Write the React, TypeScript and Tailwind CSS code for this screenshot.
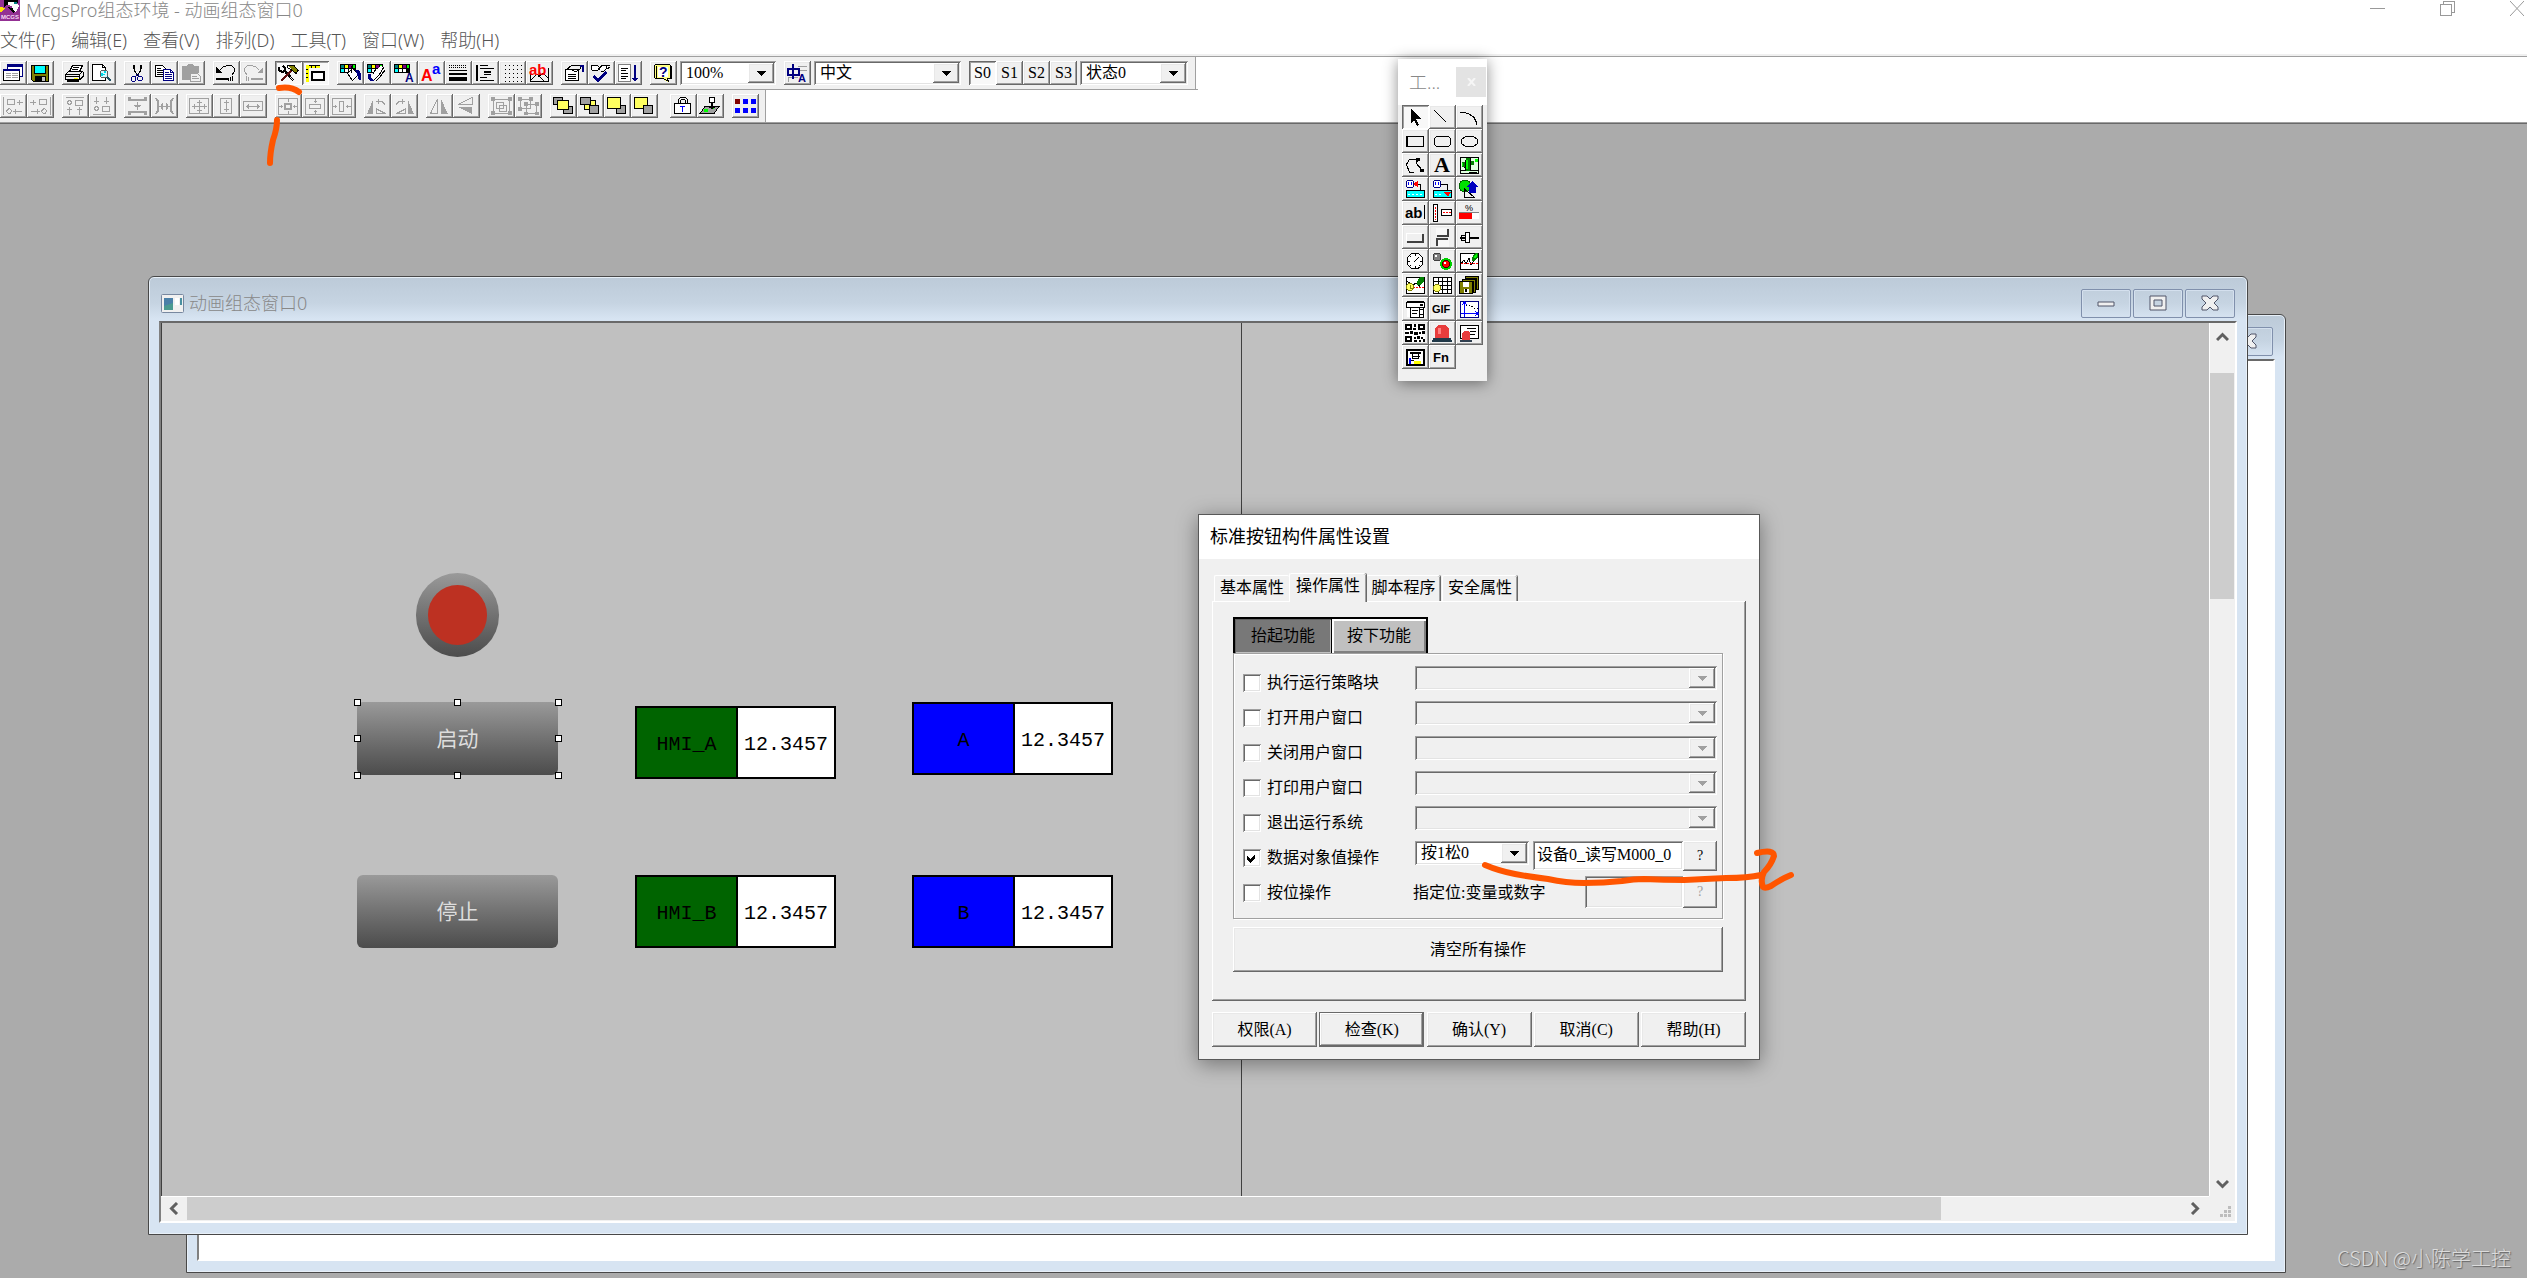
import React from 'react';
import type { ReactNode } from 'react';

const RAISED =
  'bg-[#f0f0f0] shadow-[inset_-1px_-1px_#696969,inset_1px_1px_#fff,inset_-2px_-2px_#a0a0a0,inset_2px_2px_#e8e8e8]';
const PRESSED = 'bg-[#f8f8f8] shadow-[inset_1px_1px_#696969,inset_-1px_-1px_#fff,inset_2px_2px_#a0a0a0]';
const SUNKEN =
  'shadow-[inset_1px_1px_#a0a0a0,inset_-1px_-1px_#fff,inset_2px_2px_#696969,inset_-2px_-2px_#e3e3e3]';
const SONG = "font-['Liberation_Serif','Noto_Sans_CJK_SC',serif]";
const UI = "font-['Noto_Sans','Noto_Sans_CJK_SC',sans-serif]";

const NAVY = '#000080';
const GRAY = '#a0a0a0';

type Shape = { d: string; c?: string; w?: number };
const F = ({ d, c = '#000' }: Shape) => <path d={d} fill={c} />;
const L = ({ d, c = '#000', w = 1 }: Shape) => <path d={d} fill="none" stroke={c} strokeWidth={w} />;
const T = ({ x, y, s, c = '#000', children }: { x: number; y: number; s: number; c?: string; children: ReactNode }) => (
  <text x={x} y={y} fontSize={s} fill={c} fontWeight="bold" fontFamily="Liberation Sans, Noto Sans CJK SC, sans-serif">
    {children}
  </text>
);

const palette = (
  <>
    <F d="M3 3h16v9H3z" />
    <F c="#008080" d="M4 4h3v3H4z" />
    <F c="#ffff00" d="M8 4h3v3H8z" />
    <F c="#800080" d="M12 4h3v3h-3z" />
    <F c="#00ff00" d="M16 4h2v3h-2z" />
    <F c="#00ffff" d="M4 8h3v3H4z" />
    <F c="#fff" d="M8 8h3v3H8zM12 8h3v3h-3z" />
  </>
);

const icons: Record<string, ReactNode> = {
  windows: (
    <>
      <F c="#fff" d="M7 3h16v13H7z" />
      <L c={NAVY} d="M7.5 3.5h15v12h-15z" />
      <F c={NAVY} d="M7 3h16v3H7z" />
      <F c="#fff" d="M3 8h17v12H3z" />
      <L d="M3.5 8.5h16v11h-16z" />
      <F c={NAVY} d="M3 8h17v2H3z" />
      <L c={GRAY} d="M6 12.5h5M12 12.5h6M6 14.5h5M12 14.5h6M6 16.5h5M12 16.5h6" />
    </>
  ),
  save: (
    <>
      <F d="M4 4h18v17H6l-2-2z" />
      <F c="#808000" d="M5 5h16v15H6l-1-1z" />
      <F d="M7 4h12v9H7z" />
      <F c="#00ffff" d="M8 5h10v7H8z" />
      <F d="M8 15h11v5H8z" />
      <F c="#c0c0c0" d="M15 16h3v4h-3z" />
    </>
  ),
  print: (
    <>
      <F c="#fff" d="M8 10l3-6h10l-3 6z" />
      <L d="M7.500 10.500l3-6h10l-3 6M11 6.500h6M10 8.500h6M3.500 13.500l3-3h14l-3 3zM3.500 13v5.500h14V13M18 18.500l3-3V11" />
      <F d="M3 15h15v1H3zM5 19h12v2H5z" />
      <F c="#ffff00" d="M12 17h4v1h-4z" />
    </>
  ),
  preview: (
    <>
      <F c="#fff" d="M3 3h11l3 3v14H3z" />
      <L d="M3.500 3.500h10l3 3v13h-13zM13.500 3.500v3h3" />
      <circle cx="15" cy="13" r="4" fill="#d8faff" stroke="#606060" />
      <F c="#00d8e8" d="M12 12h2v3h-2zM15 10h2v2h-2zM14 13h2v1h-2z" />
      <L c="#205060" w={2} d="M18 16l4 4" />
    </>
  ),
  cut: (
    <>
      <L w={2} d="M10 4v4M17 4v4" />
      <L d="M10.500 8v2l4 5M16.500 8v2l-4 5" />
      <L c={NAVY} d="M13 13l-2 4M14 13l1 3" />
      <circle cx="9.500" cy="18" r="2.500" fill="none" stroke={NAVY} />
      <circle cx="16" cy="17.500" r="2.500" fill="none" stroke={NAVY} />
    </>
  ),
  copy: (
    <>
      <F c="#fff" d="M4 4h8l3 3v9H4z" />
      <L d="M4.500 4.500h7l3 3v8h-10zM6 7.500h4M6 9.500h6M6 11.500h6M6 13.500h6" />
      <F c="#fff" d="M12 8h8l3 3v9H12z" />
      <L c={NAVY} d="M12.500 8.500h7l3 3v8h-10zM19.500 8.500v3h3M14 11.500h4M14 13.500h7M14 15.500h7M14 17.500h7" />
    </>
  ),
  paste: (
    <>
      <F c={GRAY} d="M4 5h5l1-2h5l1 2h5v14H4z" />
      <F c="#f0f0f0" d="M12 12h8l3 3v6H12z" />
      <L c={GRAY} d="M12.500 12.500h7l3 3v5h-10zM14 15.500h5M14 17.500h7M9 6.500h7" />
    </>
  ),
  undo: (
    <>
      <L d="M6.500 9.500l4-4h2l1-1h5l3 3v3l-3 4" />
      <F d="M3 6v6h6z" />
      <F d="M3 17h12v2H3zM17 16h1v4h-1zM19 15h1v5h-1zM15 17h1v3h-1z" />
    </>
  ),
  redo: (
    <>
      <L c={GRAY} d="M19.500 9.500l-4-4h-2l-1-1h-5l-3 3v3l3 4" />
      <F c={GRAY} d="M23 6v6h-6z" />
      <F c={GRAY} d="M11 17h12v2H11zM6 15h1v5H6zM8 16h1v4H8z" />
    </>
  ),
  tools: (
    <>
      <L d="M8 9l10 11M9 8l10 11" />
      <L w={2} d="M4 6v3l3 2 3-1V7L8 5" />
      <L c="#601010" w={2} d="M17 9L6 20" />
      <F c="#808000" d="M12 4h7l4 5-2 3-5-4z" />
      <L d="M12 4.500h7l4 5-2 3-5-4-4-2z" />
    </>
  ),
  ruler: (
    <>
      <F c="#ffff00" d="M4 4h14v3H4zM4 7h3v14H4z" />
      <L d="M7 4.500h11M4 8.500h2M4 12.500h2M4 16.500h2M9.500 7V5M13.500 7V5" />
      <F c="#fff" d="M10 11h13v9H10z" />
      <L d="M9.500 10.500h13v9h-13zM10.500 11.500h11v7h-11z" />
    </>
  ),
  fillColor: (
    <>
      {palette}
      <F c="#fff" d="M10 12l5-4 7 6-6 6z" />
      <L d="M10.500 12.500l5-5 6 6-6 6zM14.500 5v7" />
      <F c={NAVY} d="M18 9h4l2 4v6h-2l-2-6z" />
    </>
  ),
  brushColor: (
    <>
      {palette}
      <F c="#fff" d="M11 10l6-5 4 2-5 8-5 4-4-3z" />
      <L d="M20 6l-5 8-5 5H6M11 9l-2 4M21 9l-5 7-4 4" />
      <F c={NAVY} d="M4 13h3v4l3 3H6l-2-2z" />
    </>
  ),
  fontColor: (
    <>
      {palette}
      <T x={14} y={21} s={12} c={NAVY}>A</T>
    </>
  ),
  font: (
    <>
      <T x={3} y={20} s={16} c="#f00">A</T>
      <T x={14} y={13} s={15} c="#00f">a</T>
    </>
  ),
  lineStyle: (
    <>
      <path d="M4 4.500h18M4 6.500h18" stroke="#000" strokeDasharray="1 1" />
      <F d="M4 9h18v1H4zM4 12h18v2H4zM4 16h18v4H4z" />
    </>
  ),
  lineAlign: <F d="M4 4h2v16H4zM8 4h8v1H8zM8 7h14v1H8zM12 10h7v2h-7zM12 13h7v1h-7zM8 16h7v1H8zM8 19h14v1H8z" />,
  grid: (
    <path d="M6 4.500h17M6 8.500h17M6 12.500h17M6 16.500h17M6 20.500h17" stroke="#000" strokeDasharray="1 3" />
  ),
  label: (
    <>
      <L d="M4.500 12v8.500h18v-14M5 19l6-6 7 7M12 16l5-4 5 5" />
      <T x={3} y={14} s={15} c="#f00">ab</T>
    </>
  ),
  props: (
    <>
      <F c="#fff" d="M4 8h13v12H4z" />
      <L d="M4.500 8.500h13v11h-13zM7 13.500h8M7 15.500h8M7 17.500h8M5 9l6-5h3l5 1v3l-4 3-4-2" />
      <F c={NAVY} d="M19 4h4v7h-2V6h-2z" />
    </>
  ),
  check: (
    <>
      <F c="#fff" d="M4 5h16v4H4z" />
      <L d="M3.500 9V4.500h6l2 2-2 3h-6M11 9l3-5h4l1 3-3 3h-3M19 4h3M19 8l3-2" />
      <L c={NAVY} w={2} d="M6 15l4 4 8-8M6 16l4 4 8-8" />
    </>
  ),
  sort: (
    <>
      <F c="#fff" d="M4 3h12v17H4z" />
      <L c="#808080" d="M3.500 3.500h12v17h-12z" />
      <L d="M6 7.500h7M6 9.500h5M6 12.500h7M6 15.500h7M6 17.500h5" />
      <F c={NAVY} d="M19 4h2v13h2l-3 4-3-4h2z" />
    </>
  ),
  help: (
    <>
      <F c="#ffff80" d="M5 4h16v14h-4l1 3-5-3H5z" />
      <L d="M5.500 3.500h14l2 2v12h-4l1 3-5-3h-8l-1-1v-12z" />
      <L d="M6.500 4.500v12M20.500 5v12" />
      <F c="#fff" d="M8 6h10v10H8z" />
      <T x={9} y={16} s={14} c={NAVY}>?</T>
    </>
  ),
  translate: (
    <>
      <L c={GRAY} d="M14 5.500h9M14 9.500h9M4 16.500h10M4.500 16v5" />
      <L c={NAVY} w={2} d="M4 8h11v6H4zM9 3v15" />
      <T x={14} y={21} s={11} c={NAVY}>A</T>
    </>
  ),
  alignLeft: <L c={GRAY} d="M3.500 3v18M7.500 5.500h7v5h-7zM17 8.500h6M19.500 6v5M13 17.500h9M15.500 15v5M7.500 15.500l2-1 2 2-1 3h-2l-2-2z" />,
  alignRight: <L c={GRAY} d="M23.500 3v18M12.500 5.500h7v5h-7zM3 8.500h6M6.500 6v5M4 17.500h9M10.500 15v5M15.500 15.500l2-1 2 2-1 3h-2l-2-2z" />,
  alignTop: <L c={GRAY} d="M4 3.500h18M13.500 6.500h7v5h-7zM6.500 6.500h2l1 2-1 2h-2l-1-2zM7.500 13v8M5 15.500h5M17.500 13v8M15 15.500h5" />,
  alignBottom: <L c={GRAY} d="M4 20.500h18M13.500 12.500h7v5h-7zM6.500 12.500h2l1 2-1 2h-2l-1-2zM7.500 3v7M5 7.500h5M17.500 3v7M15 7.500h5" />,
  sameTop: (
    <>
      <F c={GRAY} d="M4 3h3v2h13V3h3v4H4zM4 21h3v-2h13v2h3v-4H4z" />
      <L c={GRAY} d="M13.500 8v8M10 11.500h7M11 12.500h5" />
    </>
  ),
  sameSide: (
    <>
      <F c={GRAY} d="M4 4h2l2 3v10l-2 3H4l2-4V8zM23 4h-2l-2 3v10l2 3h2l-2-4V8z" />
      <L c={GRAY} d="M8 12.500h11M11.500 9v7M15.500 9v7M10.500 10v5M16.500 10v5" />
    </>
  ),
  sizeBoth: <L c={GRAY} d="M3.500 4.500h19v15h-19zM6 12.500h15M13.500 6v13M8.500 10v5M18.500 10v5M11 8.500h5M11 16.500h5" />,
  sizeH: <L c={GRAY} d="M7.500 4.500h11v15h-11zM13.500 6v12M11 8.500h5M11 15.500h5" />,
  sizeW: <L c={GRAY} d="M3.500 7.500h19v9h-19zM6 12.500h14M8.500 10v5M17.500 10v5M7.500 11v3M18.500 11v3" />,
  centerBoth: <L c={GRAY} d="M3.500 4.500h19v16h-19zM9.500 9.500h7v6h-7zM10.500 10.500h5v4h-5zM4 12.500h4M18 12.500h4M13.500 5v3M13.500 17v3M6.500 11v3M19.500 11v3" />,
  centerV: <L c={GRAY} d="M3.500 4.500h19v16h-19zM7.500 10.500h11v4h-11zM13.500 5v4M13.500 16v4M12 7.500h3M12 17.500h3" />,
  centerH: <L c={GRAY} d="M3.500 4.500h19v16h-19zM10.500 7.500h4v10h-4zM4 12.500h4M17 12.500h5M6.500 11v3M18.500 11v3" />,
  rotLeft: (
    <>
      <F c={GRAY} d="M3 20l6-14v14z" />
      <L c={GRAY} d="M12.500 15v4.500h9zM12 7.500h6l3 3M14.500 5v5" />
    </>
  ),
  rotRight: (
    <>
      <F c={GRAY} d="M23 20L17 6v14z" />
      <L c={GRAY} d="M14.500 15v4.500h-9zM14 7.500H8l-3 3M11.500 5v5" />
    </>
  ),
  flipH: (
    <>
      <L c={GRAY} d="M11.500 5v14.500h-7z" />
      <F c={GRAY} d="M15 5l7 15h-7z" />
    </>
  ),
  flipV: (
    <>
      <L c={GRAY} d="M5 10.500h14v-7z" />
      <F c={GRAY} d="M5 13h14v7z" />
    </>
  ),
  group: (
    <>
      <L c={GRAY} d="M5.500 5.500h16v14h-16zM8.500 8.500h7v6h-7zM11.500 11.500h7v6h-7z" />
      <F c={GRAY} d="M3 3h4v4H3zM20 3h4v4h-4zM3 17h4v4H3zM20 17h4v4h-4z" />
    </>
  ),
  ungroup: (
    <>
      <L c={GRAY} d="M5.500 5.500h10v9h-10zM11.500 10.500h10v9h-10z" />
      <F c={GRAY} d="M3 3h4v4H3zM14 3h4v4h-4zM3 13h4v4H3zM9 8h4v4H9zM20 8h4v4h-4zM9 18h4v3H9zM20 18h4v3h-4z" />
    </>
  ),
  front: (
    <>
      <F c={GRAY} d="M4 4h8v6H4zM14 13h8v7h-8z" />
      <L d="M3.500 3.500h9v7h-9zM13.500 12.500h9v7h-9z" />
      <F c="#ffff60" d="M8 7h10v8H8z" />
      <L d="M7.500 6.500h11v9h-11z" />
    </>
  ),
  back: (
    <>
      <F c="#ffff60" d="M8 7h10v8H8z" />
      <L d="M7.500 6.500h11v9h-11z" />
      <F c={GRAY} d="M4 4h9v6H4zM13 12h8v8h-8z" />
      <L d="M3.500 3.500h10v7h-10zM12.500 11.500h9v8h-9z" />
    </>
  ),
  forward: (
    <>
      <F c={GRAY} d="M13 12h8v8h-8z" />
      <L d="M12.500 11.500h9v8h-9z" />
      <F c="#ffff60" d="M4 4h12v11H4z" />
      <L d="M3.500 3.500h13v11h-13z" />
    </>
  ),
  backward: (
    <>
      <F c="#ffff60" d="M4 4h12v11H4z" />
      <L d="M3.500 3.500h13v11h-13z" />
      <F c={GRAY} d="M13 12h8v8h-8z" />
      <L d="M12.500 11.500h9v8h-9z" />
    </>
  ),
  lock: (
    <>
      <L d="M8.500 10V5.500l2-2h5l2 2V10M10.500 10V6.500l1-1h3l1 1V10" />
      <F c="#fff" d="M5 10h16v10H5z" />
      <L d="M4.500 9.500h16v10h-16z" />
      <F c="#00f" d="M10 12h5v1h-2v5h-1v-5h-2z" />
    </>
  ),
  stamp: (
    <>
      <F c={GRAY} d="M3 19l5-7h14l-5 8H4z" />
      <F c="#00ff00" d="M7 15h4v3H7zM14 12h3v3h-3z" />
      <L d="M3 19.500l5-7h14l-5 7z" />
      <circle cx="15" cy="6" r="3" fill="#fff" stroke="#000" />
      <F d="M14 9h2v6h-2zM12 13h6v1h-6z" />
    </>
  ),
  dots: (
    <>
      <F c="#800000" d="M3 5h5v5H3z" />
      <F c="#00f" d="M11 5h5v5h-5zM19 5h5v5h-5zM3 14h5v5H3zM11 14h5v5h-5zM19 14h5v5h-5z" />
    </>
  ),
  arrow: <F d="M9 4v14l3-3 3 6 2-1-3-6h5z" />,
  line: <L d="M5 5l12 12" />,
  arc: <L d="M4 7.500h5l5 2 4 3 2 4v3" />,
  rect: <L d="M4.500 7.500h17v10h-17zM5.500 8v9" />,
  roundRect: <L d="M7.500 7.500h12l2 2v6l-2 2h-12l-2-2v-6z" />,
  ellipse: <L d="M9.500 7.500h8l4 3v4l-4 3h-8l-4-3v-4z" />,
  polygon: (
    <>
      <L d="M16 6.500H7.500l-3 5 3 8h4M16 7l-2 3 6 7" />
      <F d="M14 5h4v3h-4zM18 16h4v3h-4z" />
    </>
  ),
  text: (
    <text x="5" y="19" fontSize="22" fontWeight="bold" fontFamily="Liberation Serif, serif">A</text>
  ),
  picture: (
    <>
      <F c="#e0ffe0" d="M4 4h19v17H4z" />
      <L d="M4.500 4.500h18v16h-18zM4 17.500h19M13 19.500h8" />
      <F c="#008000" d="M10 5h4v13h-4zM6 9h3v5H6zM15 8h3v4h-3z" />
      <F c="#00ff00" d="M10 7h2v9h-2zM6 10h1v3H6zM19 6h3v3h-3z" />
      <L d="M9.500 7v10M14.500 5v12M8 14h2" />
    </>
  ),
  tankIn: (
    <>
      <circle cx="8" cy="7" r="4" fill="#fff" stroke={NAVY} />
      <F c="#00f" d="M6 5h1v3H6zM9 5h1v3H9z" />
      <F c="#f00" d="M11 7l5-3v6z" />
      <F c="#00ffff" d="M5 14h17v6H5z" />
      <L d="M16 7.500h2.500V14M4.500 13.500h18v7h-18z" />
      <path d="M6 17.500h15" stroke="#fff" strokeDasharray="2 2" />
    </>
  ),
  tankOut: (
    <>
      <circle cx="8" cy="7" r="4" fill="#fff" stroke={NAVY} />
      <F c="#00f" d="M6 5h1v3H6zM9 5h1v3H9z" />
      <F c="#00ffff" d="M5 14h17v6H5z" />
      <L d="M12 7.500h6.500V14M4.500 13.500h18v7h-18z" />
      <F c="#f00" d="M15 15h7l-3 5z" />
      <path d="M6 17.500h8" stroke="#fff" strokeDasharray="2 2" />
    </>
  ),
  shapes: (
    <>
      <circle cx="9" cy="9" r="6" fill="#00e000" stroke="#006000" />
      <F c="#0000c0" d="M16 4l7 6h-3v6h-7v-6h-2z" />
      <L d="M8.500 12v8.500h10z" />
    </>
  ),
  input: (
    <>
      <T x={3} y={17} s={15}>ab</T>
      <F d="M22 4h1v14h-1z" />
    </>
  ),
  sliders: (
    <>
      <F c="#fff" d="M4 3h5v18H4zM12 9h11v6H12z" />
      <L d="M4.500 3.500h4v17h-4zM12.500 8.500h10v6h-10z" />
      <path d="M6.500 6v13M14 11.500h8" stroke="#f00" strokeDasharray="2 1" />
    </>
  ),
  percent: (
    <>
      <text x="9" y="10" fontSize="9" fontFamily="Liberation Sans">%</text>
      <F c="#808080" d="M3 11h20v1H3z" />
      <F c="#f00" d="M3 12h13v6H3z" />
      <F c="#fff" d="M16 12h7v6h-7z" />
    </>
  ),
  button: (
    <>
      <F c="#404040" d="M5 9h17v9H5z" />
      <F c="#fff" d="M4 8h16v8H4z" />
      <F c="#f0f0f0" d="M5 9h15v7H5z" />
    </>
  ),
  buttons: (
    <>
      <F c="#404040" d="M8 4h12v8H8z" />
      <F c="#f8f8f8" d="M7 3h11v7H7z" />
      <F c="#404040" d="M7 13h12v8H7z" />
      <F c="#f8f8f8" d="M9 15h11v7H9z" />
    </>
  ),
  slider: (
    <>
      <F d="M4 12h19v2H4z" />
      <F c="#fff" d="M9 8h4v10H9z" />
      <L d="M9.500 7.500h4v10h-4zM5.500 10.500h4v5h-4z" />
    </>
  ),
  gauge: (
    <>
      <circle cx="13" cy="12" r="8" fill="#fff" stroke="#000" />
      <L d="M12 13l5-5M13.500 5v2M13.500 17v2M6 12.500h2M18 12.500h2M8 7l1 1M8 17l1-1M17 16l1 1" />
    </>
  ),
  lamps: (
    <>
      <circle cx="8" cy="8" r="4" fill="#808080" stroke="#404040" />
      <circle cx="17" cy="15" r="5" fill="#f00" stroke="#00d000" strokeWidth="2" />
      <circle cx="17" cy="15" r="3.500" fill="none" stroke="#400000" />
      <F c="#fff" d="M6 6h2v2H6zM15 13h2v2h-2z" />
    </>
  ),
  curve: (
    <>
      <F c="#fff" d="M4 4h18v17H4z" />
      <L d="M4.500 4.500h18v16h-18zM5 15l3-4 2 4 3-6 2 7 3-4" />
      <path d="M5 14.500h17" stroke="#f00" strokeDasharray="2 1" />
      <F c="#008000" d="M16 9l3-5h3v4l-3 4h-3z" />
      <F c="#00ff00" d="M18 8l2-3h1v2l-2 3z" />
    </>
  ),
  history: (
    <>
      <F c="#fff" d="M4 4h18v17H4z" />
      <L d="M4.500 4.500h18v16h-18zM5 8l5 4 5-2 4 5" />
      <path d="M5 14.500h17" stroke="#f00" strokeDasharray="2 1" />
      <F c="#008000" d="M15 9l3-5h4v4l-4 4h-3z" />
      <circle cx="8" cy="14" r="3.500" fill="#ffff60" stroke="#808000" />
      <L c="#808000" d="M8 12v3h3" />
    </>
  ),
  table: (
    <>
      <F c="#fff" d="M4 4h19v16H4z" />
      <L d="M4.500 4.500h18v16h-18zM4 8.500h19M4 12.500h19M4 16.500h19M9.500 4v16M13.500 4v16M18.500 4v16" />
      <circle cx="8" cy="15" r="3.500" fill="#ffff60" stroke="#808000" />
    </>
  ),
  disks: (
    <>
      <F d="M9 3h14v14H9zM6 6h14v14H6zM3 8h14v13H3z" />
      <F c="#808000" d="M10 4h12v1H10zM21 5h1v11h-1zM7 7h12v1H7zM18 8h1v11h-1zM4 9h12v11H4z" />
      <F c="#fff" d="M7 9h6v5H7zM8 16h5v4H8z" />
      <F d="M9 16h2v3H9z" />
    </>
  ),
  combo: (
    <>
      <F c="#fff" d="M5 5h18v15H5z" />
      <L d="M4.500 5.500h18v5h-18zM8.500 10.500h13v10h-13zM17.500 10v10M10 13.500h6M10 16.500h5" />
      <F d="M5 4h17v2H5zM18 7h3v2h-3zM18 12h3v1h-3zM18 17h3v1h-3z" />
    </>
  ),
  gif: (
    <text x="3" y="16" fontSize="11" fontFamily="Liberation Sans, sans-serif" fontWeight="bold">GIF</text>
  ),
  plot: (
    <>
      <F c="#fff" d="M4 4h19v17H4z" />
      <L c={NAVY} d="M4.500 4.500h18v16h-18z" />
      <L c="#00f" d="M8.500 5v15M5 16.500h17M6 8l2.500-3 2.500 3M19 14l3 2.500-3 2.500" />
      <path d="M10 8.500h5l3 3h4" fill="none" stroke="#000" strokeDasharray="1 2" />
    </>
  ),
  qr: (
    <>
      <F c="#fff" d="M3 3h20v18H3z" />
      <L w={2} d="M4 4h5v4H4zM17 4h5v4h-5zM4 16h5v4H4z" />
      <F d="M12 3h2v3h-2zM11 7h3v2h-3zM3 11h4v2H3zM8 10h3v3H8zM12 11h4v3h-4zM17 11h2v2h-2zM20 10h3v3h-3zM12 16h2v2h-2zM15 15h3v3h-3zM19 16h2v2h-2zM12 19h3v2h-3zM17 19h2v2h-2zM21 18h2v3h-2z" />
    </>
  ),
  alarm: (
    <>
      <F c="#e83c3c" d="M6 18V8l3-4h8l3 4v10z" />
      <F c="#ff8080" d="M9 7h3v6H9z" />
      <F c="#203848" d="M4 17h18v2h1v2H3v-2h1z" />
    </>
  ),
  alarmLog: (
    <>
      <F c="#fff" d="M4 4h19v14H4z" />
      <L d="M4.500 4.500h18v13h-18zM11 7.500h9M14 10.500h6M14 13.500h5" />
      <F c="#e83c3c" d="M6 19v-7l2-2h4l2 2v7z" />
      <F c="#304050" d="M4 19h12v2H4z" />
    </>
  ),
  painter: (
    <>
      <F c="#fff" d="M4 4h18v17H4z" />
      <L d="M4.500 4.500h18v16h-18zM5.500 5.500h16v14h-16zM8 8.500h11M10.500 8v5h6V8M9 15.500h3M8 7.500h11" />
      <F c="#00f" d="M7 13h2v6H7z" />
      <F c="#ffff00" d="M12 16h7v3h-7z" />
      <L d="M10 11.500h8" />
    </>
  ),
  fn: <T x={4} y={17} s={13}>Fn</T>,
};

function Tool({ name, pressed = false }: { name: string; pressed?: boolean }) {
  return (
    <button type="button" aria-label={name} aria-pressed={pressed} className={`h-6 w-[27px] ${pressed ? PRESSED : RAISED}`}>
      <svg width="27" height="24" viewBox="0 0 27 24" className="overflow-visible" shapeRendering="crispEdges" aria-hidden="true">
        {icons[name]}
      </svg>
    </button>
  );
}

function Group({ names, pressed = false }: { names: string[]; pressed?: boolean }) {
  return (
    <div className="flex">
      {names.map((n) => (
        <Tool key={n} name={n} pressed={pressed} />
      ))}
    </div>
  );
}

function Combo({ value, label, disabled = false, className = '' }: { value: string; label: string; disabled?: boolean; className?: string }) {
  return (
    <div className={`relative h-6 ${className}`}>
      <select
        aria-label={label}
        disabled={disabled}
        className={`h-6 w-full appearance-none pl-1.5 text-base leading-6 text-black opacity-100 ${SUNKEN} ${disabled ? 'bg-[#f0f0f0]' : 'bg-white'}`}
      >
        <option>{value}</option>
      </select>
      <span className={`pointer-events-none absolute top-0.5 right-0.5 flex h-5 w-[26px] items-center justify-center ${RAISED}`}>
        <svg width="9" height="5" viewBox="0 0 9 5" shapeRendering="crispEdges">
          <path d="M0 0h9L4.500 5z" fill={disabled ? GRAY : '#000'} />
        </svg>
      </span>
    </div>
  );
}

const menus = ['文件(F)', '编辑(E)', '查看(V)', '排列(D)', '工具(T)', '窗口(W)', '帮助(H)'];
const states = ['S0', 'S1', 'S2', 'S3'];

function Header() {
  return (
    <header className="shrink-0 border-b border-[#696969] bg-white">
      <div className="flex h-[23px] items-start">
        <svg width="20" height="21" viewBox="0 0 20 21" className="shrink-0" shapeRendering="crispEdges">
          <F c="#933093" d="M0 0h20v21H0z" />
          <F d="M4 0h14v3l-3 2H7l-3 2zM8 7l9 3-4 3z" />
          <F c="#fff" d="M8 2h8l3 4-3 6-3-2-1-4-4-1z" />
          <F c="#008080" d="M14 2h3v2h-3z" />
          <F c="#ffe000" d="M0 7l5 1-3 4H0z" />
          <text x="1" y="19" fontSize="6" fontWeight="bold" fill="#f4d8f4" fontFamily="Liberation Sans">MCGS</text>
        </svg>
        <h1 className="ml-1.5 text-lg leading-5 font-light text-[#888]">McgsPro组态环境 - 动画组态窗口0</h1>
        <div className="ml-auto flex">
          <button type="button" aria-label="最小化" className="flex h-[18px] w-[69px] justify-center">
            <svg width="15" height="18" viewBox="0 0 15 18" shapeRendering="crispEdges"><L c="#999" d="M0 8.500h15" /></svg>
          </button>
          <button type="button" aria-label="还原" className="flex h-[18px] w-[70px] justify-center">
            <svg width="15" height="18" viewBox="0 0 15 18" shapeRendering="crispEdges"><L c="#999" d="M.5 4.500h11v11H.5zM3.500 4V1.500h11v11H12" /></svg>
          </button>
          <button type="button" aria-label="关闭" className="flex h-[18px] w-[45px] items-start justify-end pr-[3px]">
            <svg width="14" height="18" viewBox="0 0 14 18"><L c="#999" d="M0 1l14 15M14 1L0 16" /></svg>
          </button>
        </div>
      </div>
      <nav className="flex h-[33px] items-center gap-4 border-b-2 border-[#f0f0f0] pt-0.5 text-lg font-light text-[#555]">
        {menus.map((m) => (
          <button key={m} type="button">{m}</button>
        ))}
      </nav>
      <div className={`border-y border-[#a0a0a0] ${SONG}`}>
        <div className="flex h-8 w-fit items-center gap-2 border-r border-[#a0a0a0] bg-[#f0f0f0] pr-[7px]">
          <Group names={['windows', 'save']} />
          <Group names={['print', 'preview']} />
          <Group names={['cut', 'copy', 'paste']} />
          <Group names={['undo', 'redo']} />
          <Group names={['tools', 'ruler']} pressed />
          <Group names={['fillColor', 'brushColor', 'fontColor', 'font', 'lineStyle', 'lineAlign', 'grid', 'label']} />
          <Group names={['props', 'check', 'sort']} />
          <div className="flex gap-[3px]">
            <Tool name="help" />
            <Combo value="100%" label="缩放" className="w-24" />
          </div>
          <div className="flex gap-[3px]">
            <Tool name="translate" />
            <Combo value="中文" label="语言" className="w-[147px]" />
          </div>
          <div className="flex">
            {states.map((s) => (
              <button key={s} type="button" className={`h-6 w-[27px] text-base leading-6 ${s === 'S0' ? PRESSED : RAISED}`}>{s}</button>
            ))}
            <Combo value="状态0" label="状态" className="ml-[3px] w-[108px]" />
          </div>
        </div>
        <div className="h-px w-[1198px] bg-[#a0a0a0]" />
        <div className="flex h-8 w-fit items-center gap-2 border-r border-[#a0a0a0] bg-[#f0f0f0] pr-1.5">
          <Group names={['alignLeft', 'alignRight']} />
          <Group names={['alignTop', 'alignBottom']} />
          <Group names={['sameTop', 'sameSide']} />
          <Group names={['sizeBoth', 'sizeH', 'sizeW']} />
          <Group names={['centerBoth', 'centerV', 'centerH']} />
          <Group names={['rotLeft', 'rotRight']} />
          <Group names={['flipH', 'flipV']} />
          <Group names={['group', 'ungroup']} />
          <Group names={['front', 'back', 'forward', 'backward']} />
          <div className="ml-1 flex"><Group names={['lock', 'stamp']} /></div>
          <Group names={['dots']} />
        </div>
      </div>
    </header>
  );
}

const aeroGlyphs: Record<string, string> = {
  最小化: 'M1 7h16v4H1z',
  最大化: 'M1 1h16v14H1zM5 5v6h8V5z',
  关闭: 'M1 1h5l3 3 3-3h5v3l-4 4 4 4v3h-5l-3-3-3 3H1v-3l4-4-4-4z',
};

function ChildWindow({ title, className, children }: { title: string; className: string; children?: ReactNode }) {
  return (
    <section
      className={`absolute flex h-[959px] w-[2100px] flex-col rounded-t-md border border-[#484848] bg-[#d7e4f2] bg-[linear-gradient(#bccad8,#c6d4e2_26px,#d7e4f2_42px)] px-2.5 pb-[11px] shadow-[inset_0_0_0_1px_#e8f0f8] ${className}`}
    >
      <div className="flex h-11 shrink-0 items-center gap-[5px] px-0.5">
        <svg width="23" height="19" viewBox="0 0 23 19" className="mt-2">
          <rect x=".5" y=".5" width="22" height="18" rx="1" fill="#f0f0f0" stroke="#7888a0" />
          <path d="M3 4h9v12H3z" fill="#4a9a90" />
          <path d="M3 4h9v5l-9 3z" fill="#4a80a8" />
          <path d="M14 4h4v7h-4z" fill="#fff" />
          <path d="M19 4h2v7h-2z" fill="#4a90a0" />
        </svg>
        <h2 className="mt-2 text-lg leading-6 font-light text-[#888]">{title}</h2>
        <div className="mt-2 ml-auto flex gap-0.5">
          {Object.entries(aeroGlyphs).map(([name, d]) => (
            <button
              key={name}
              type="button"
              aria-label={name}
              className="flex h-[29px] w-[50px] items-center justify-center rounded-xs border border-[#8090ac] shadow-[inset_0_0_0_1px_#d4e0ee]"
            >
              <svg width="18" height="16" viewBox="0 0 18 16">
                <path d={d} fill="#f0f0f0" fillRule="evenodd" stroke="#505468" strokeLinejoin="round" />
              </svg>
            </button>
          ))}
        </div>
      </div>
      <div className="min-h-0 flex-1 border-2 border-t-[#696969] border-r-white border-b-white border-l-[#808080] bg-white">{children}</div>
    </section>
  );
}

function Chevron({ d }: { d: string }) {
  return (
    <svg width="13" height="13" viewBox="0 0 13 13"><L c="#606060" w={3} d={d} /></svg>
  );
}

function Readout({ tag, tone, className }: { tag: string; tone: string; className: string }) {
  return (
    <div className={`absolute flex h-[73px] w-[201px] border-2 border-black pt-px font-['Liberation_Mono',monospace] text-xl text-black ${className}`}>
      <span className={`-mt-px flex w-[101px] items-center justify-center border-r-2 border-black pt-1 ${tone}`}>{tag}</span>
      <span className="-mt-px flex flex-1 items-center justify-center bg-white pt-1">12.3457</span>
    </div>
  );
}

const handles = [
  'left-[192px] top-[376px]', 'left-[292px] top-[376px]', 'left-[393px] top-[376px]',
  'left-[192px] top-[412px]', 'left-[393px] top-[412px]',
  'left-[192px] top-[449px]', 'left-[292px] top-[449px]', 'left-[393px] top-[449px]',
];

const PANEL_BUTTON =
  'absolute left-[195px] h-[73px] w-[201px] rounded-md bg-linear-to-b from-[#9a9a9a] to-[#4c4c4c] text-[21px] text-[#ddd]';

function Canvas() {
  return (
    <div className="grid h-full grid-cols-[minmax(0,1fr)_26px] grid-rows-[minmax(0,1fr)_25px] bg-[#f0f0f0]">
      <div className="relative overflow-hidden border-l border-[#404040] bg-[#c0c0c0]">
        <div className="absolute inset-y-0 left-[1079px] w-px bg-[#404040]" />
        <div className="absolute top-[250px] left-[254px] flex h-[84px] w-[83px] items-center justify-center rounded-full bg-linear-to-b from-[#9a9a9a] to-[#4c4c4c]">
          <div className="h-[60px] w-[59px] rounded-full bg-[#bd3122]" />
        </div>
        <button type="button" className={`top-[379px] ${PANEL_BUTTON}`}>启动</button>
        <button type="button" className={`top-[552px] ${PANEL_BUTTON}`}>停止</button>
        {handles.map((h) => (
          <span key={h} className={`absolute size-[7px] border border-black bg-white ${h}`} />
        ))}
        <Readout tag="HMI_A" tone="bg-[#006400]" className="top-[383px] left-[473px]" />
        <Readout tag="HMI_B" tone="bg-[#006400]" className="top-[552px] left-[473px]" />
        <Readout tag="A" tone="bg-[#0000ff]" className="top-[379px] left-[750px]" />
        <Readout tag="B" tone="bg-[#0000ff]" className="top-[552px] left-[750px]" />
      </div>
      <div className="flex flex-col items-center border-l border-white pr-px">
        <span className="flex h-[50px] items-start pt-2"><Chevron d="M1 9l5.500-5.500L12 9" /></span>
        <span className="h-[226px] w-full bg-[#cdcdcd]" />
        <span className="mt-auto flex pb-1.5"><Chevron d="M1 4l5.500 5.500L12 4" /></span>
      </div>
      <div className="flex items-center border-t border-white pb-px">
        <span className="flex w-[26px] justify-center"><Chevron d="M9 1L3.500 6.500 9 12" /></span>
        <span className="h-full w-[1754px] bg-[#cdcdcd]" />
        <span className="ml-auto flex pr-2"><Chevron d="M4 1l5.500 5.500L4 12" /></span>
      </div>
      <div className="flex items-end justify-end p-1">
        <svg width="11" height="11" viewBox="0 0 11 11"><F c="#bdbdbd" d="M8 0h3v3H8zM4 4h3v3H4zM8 4h3v3H8zM0 8h3v3H0zM4 8h3v3H4zM8 8h3v3H8z" /></svg>
      </div>
    </div>
  );
}

const toolbox = [
  'arrow', 'line', 'arc', 'rect', 'roundRect', 'ellipse', 'polygon', 'text', 'picture', 'tankIn', 'tankOut', 'shapes',
  'input', 'sliders', 'percent', 'button', 'buttons', 'slider', 'gauge', 'lamps', 'curve', 'history', 'table', 'disks',
  'combo', 'gif', 'plot', 'qr', 'alarm', 'alarmLog', 'painter', 'fn',
];

function Toolbox() {
  return (
    <aside className="absolute top-[59px] left-[1398px] w-[89px] bg-[#f0f0f0] pb-3 shadow-[0_2px_14px_rgba(0,0,0,0.45)]">
      <div className="flex h-[46px] items-center justify-between bg-white pl-[11px] pr-px text-lg font-light text-[#888]">
        <span>工...</span>
        <button type="button" aria-label="关闭工具箱" className="flex size-[30px] items-center justify-center bg-[#e3e3e3]">
          <svg width="9" height="8" viewBox="0 0 9 8"><L c="#f6f6f6" w={2} d="M1 0l7 8M8 0L1 8" /></svg>
        </button>
      </div>
      <div className="grid w-fit grid-cols-3 px-1">
        {toolbox.map((n) => (
          <Tool key={n} name={n} pressed={n === 'arrow'} />
        ))}
      </div>
    </aside>
  );
}

function Tick({ label, checked = false }: { label: string; checked?: boolean }) {
  return (
    <label className="flex items-center gap-1.5 pt-2 leading-[18px]">
      <span className="relative flex size-[18px]">
        <input type="checkbox" defaultChecked={checked} className={`size-[18px] appearance-none bg-white ${SUNKEN}`} />
        {checked && (
          <svg width="18" height="18" viewBox="0 0 18 18" className="pointer-events-none absolute inset-0" shapeRendering="crispEdges">
            <F d="M4 7l3 3 5-5v4l-5 5-3-3z" />
          </svg>
        )}
      </span>
      {label}
    </label>
  );
}

const plainOps = ['执行运行策略块', '打开用户窗口', '关闭用户窗口', '打印用户窗口', '退出运行系统'];
const footer = ['权限(A)', '检查(K)', '确认(Y)', '取消(C)', '帮助(H)'];
const ROW = 'grid h-[35px] grid-cols-[172px_302px] items-start';
const TAB = 'border-t border-l border-white rounded-t-xs shadow-[1px_0_#696969,inset_-1px_0_#a0a0a0]';

function Dialog() {
  return (
    <div
      role="dialog"
      aria-label="标准按钮构件属性设置"
      className={`absolute top-[514px] left-[1198px] w-[562px] border border-[#585858] bg-[#f0f0f0] pb-3 text-base text-black shadow-[0_4px_20px_rgba(0,0,0,0.4)] ${SONG}`}
    >
      <h2 className={`flex h-[44px] items-center bg-white pb-0.5 pl-[11px] text-lg font-normal ${UI}`}>标准按钮构件属性设置</h2>
      <div className="px-[13px] pt-3.5">
        <div role="tablist" className="flex items-end pl-0.5">
          <button role="tab" type="button" className="h-[26px] w-[75px] rounded-t-xs border-t border-l border-white pb-0.5">基本属性</button>
          <button role="tab" type="button" aria-selected="true" className={`relative -mb-px h-[29px] w-[77px] bg-[#f0f0f0] pb-1.5 ${TAB}`}>操作属性</button>
          <button role="tab" type="button" className={`h-[26px] w-[74px] pb-0.5 ${TAB}`}>脚本程序</button>
          <button role="tab" type="button" className={`ml-0.5 h-[26px] w-[75px] pb-0.5 ${TAB}`}>安全属性</button>
        </div>
        <div className="h-[400px] px-[21px] pt-4 shadow-[inset_-1px_-1px_#696969,inset_1px_1px_#fff,inset_-2px_-2px_#a0a0a0]">
          <div className="flex w-[195px] border-2 border-b-0 border-black">
            <button type="button" className="h-[34px] w-24 bg-[#787878] shadow-[inset_1px_1px_#606060,inset_-1px_-1px_#c0c0c0]">抬起功能</button>
            <button type="button" className="h-[34px] flex-1 border-l border-black bg-[#c0c0c0] shadow-[inset_2px_2px_#fff,inset_-2px_-2px_#808080]">按下功能</button>
          </div>
          <div className="w-[490px] border border-[#a0a0a0] pt-3 pb-[7px] pl-[9px] shadow-[inset_1px_1px_#fff,1px_1px_#fff]">
            {plainOps.map((op) => (
              <div key={op} className={ROW}>
                <Tick label={op} />
                <Combo value="" label={`${op}选项`} disabled />
              </div>
            ))}
            <div className={ROW}>
              <Tick label="数据对象值操作" checked />
              <div className="flex items-start">
                <Combo value="按1松0" label="操作方式" className="w-[114px] shrink-0" />
                <input aria-label="数据对象" defaultValue="设备0_读写M000_0" className={`ml-1 h-[29px] w-[150px] bg-white px-1 pb-1.5 ${SUNKEN}`} />
                <button type="button" aria-label="选择数据对象" className={`h-[30px] w-[34px] text-sm ${RAISED}`}>?</button>
              </div>
            </div>
            <div className={ROW}>
              <Tick label="按位操作" />
              <div className="-ml-0.5 flex items-start">
                <label htmlFor="bit" className="w-[172px] pt-2 leading-[18px]">指定位:变量或数字</label>
                <input id="bit" disabled className={`h-8 w-[98px] bg-[#f0f0f0] px-1 ${SUNKEN}`} />
                <button type="button" disabled aria-label="选择位" className={`h-8 w-[34px] text-sm text-[#a0a0a0] ${RAISED}`}>?</button>
              </div>
            </div>
          </div>
          <button type="button" className={`mt-2 h-[45px] w-[490px] ${RAISED}`}>清空所有操作</button>
        </div>
        <div className="mt-[11px] flex justify-between">
          {footer.map((f) => (
            <button key={f} type="button" className={`h-[35px] w-[105px] ${RAISED} ${f === '检查(K)' ? 'border border-[#696969]' : ''}`}>{f}</button>
          ))}
        </div>
      </div>
    </div>
  );
}

export default function App() {
  return (
    <div className={`relative flex h-screen flex-col overflow-hidden bg-[#ababab] ${UI}`}>
      <Header />
      <main className="relative flex-1">
        <ChildWindow title="" className="top-[190px] left-[186px]" />
        <ChildWindow title="动画组态窗口0" className="top-[152px] left-[148px]">
          <Canvas />
        </ChildWindow>
      </main>
      <Toolbox />
      <Dialog />
      <svg className="pointer-events-none absolute top-0 left-0" width="1900" height="1000" viewBox="0 0 1900 1000" fill="none" stroke="#ff5500" strokeWidth="6" strokeLinecap="round" strokeLinejoin="round" aria-hidden="true">
        <path d="M279 88q12-2 20 4M277 120q0 9-4 20-3 13-3 23" />
        <path d="M1485 865q14 6 30 9 16 3 33 5 18 4 36 4 20 0 38-2 12-2 22-2 20 1 40 1 22-1 42-2 22 0 35-3M1757 853q17-4 17 3-3 9-10 16-4 8-1 15 2 2 8-1 10-7 20-11" />
      </svg>
      <p className="absolute right-4 bottom-2 font-['Noto_Sans_CJK_SC',sans-serif] text-xl leading-6 font-light text-[#dcdcdc] [text-shadow:1px_1px_1px_#666]">
        CSDN @小陈学工控
      </p>
    </div>
  );
}
